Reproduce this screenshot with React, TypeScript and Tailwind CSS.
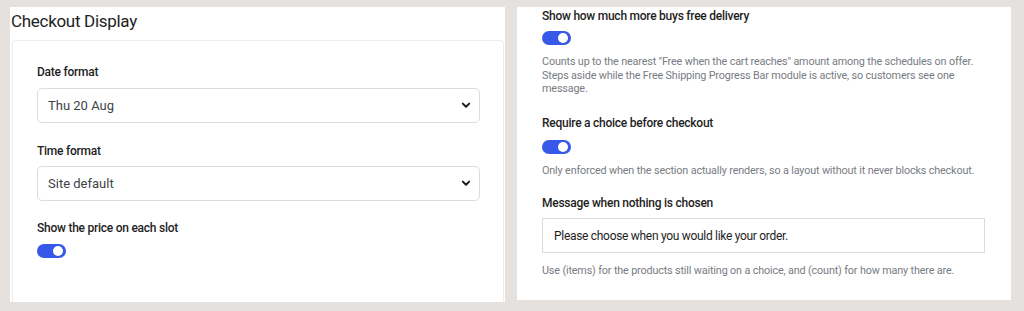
import React from 'react';

const font = { fontFamily: 'Roboto, "Open Sans", "Liberation Sans", sans-serif' };

const Toggle = () => (
  <div className="relative h-[14px] w-[29px] rounded-full bg-[#3858e9]">
    <div className="absolute right-[3px] top-[2px] h-[10px] w-[10px] rounded-full bg-white" />
  </div>
);

const Chevron = () => (
  <svg width="10" height="7" viewBox="0 0 10 7" className="text-[#1e1e1e]">
    <path d="M1.8 1.6 L5 4.8 L8.2 1.6" fill="none" stroke="currentColor" strokeWidth="2" strokeLinecap="round" strokeLinejoin="round" />
  </svg>
);

const Select = ({ value, className }: { value: string; className?: string }) => (
  <div className={`flex h-[35px] w-[443px] items-center justify-between rounded-[5px] border border-[#dcdcde] bg-white pl-[10px] pr-[8px] ${className ?? ''}`}>
    <span className="text-[13px] text-[#3c434a]">{value}</span>
    <Chevron />
  </div>
);

const Label = ({ children, className }: { children: React.ReactNode; className?: string }) => (
  <div className={`text-[12px] leading-[18px] tracking-[-0.25px] font-medium text-[#1e1e1e] ${className ?? ''}`}>{children}</div>
);

const Help = ({ children, className }: { children: React.ReactNode; className?: string }) => (
  <p className={`text-[10.8px] leading-[13.5px] tracking-[-0.15px] text-[#787c82] ${className ?? ''}`}>{children}</p>
);

export default function App() {
  return (
    <div style={font} className="flex h-[311px] w-[1024px] items-start bg-[#e5e1df] pt-[7px]">
      {/* left panel */}
      <div className="ml-[10px] flex h-[295px] w-[495px] flex-col bg-white">
        <div className="h-[33px] pl-[1px] text-[17px] leading-[28px] tracking-[-0.3px] text-[#1e1e1e]">Checkout Display</div>
        <div className="ml-[2px] mr-[1px] flex-1 rounded-t-[4px] border border-b-0 border-[#ececec] pl-[24px] pt-[22px]">
          <Label>Date format</Label>
          <Select value="Thu 20 Aug" className="mt-[7px]" />
          <Label className="mt-[19px]">Time format</Label>
          <Select value="Site default" className="mt-[6px]" />
          <Label className="mt-[18px]">Show the price on each slot</Label>
          <div className="mt-[7px]">
            <Toggle />
          </div>
        </div>
      </div>

      {/* right panel */}
      <div className="ml-[12px] h-[293px] w-[494px] bg-white pl-[25px]">
        <Label>Show how much more buys free delivery</Label>
        <div className="mt-[6px]">
          <Toggle />
        </div>
        <Help className="mt-[10px] w-[440px]">
          Counts up to the nearest "Free when the cart reaches" amount among the schedules on offer. Steps aside while
          the Free Shipping Progress Bar module is active, so customers see one message.
        </Help>
        <Label className="mt-[18px]">Require a choice before checkout</Label>
        <div className="mt-[8px]">
          <Toggle />
        </div>
        <Help className="mt-[10px]">
          Only enforced when the section actually renders, so a layout without it never blocks checkout.
        </Help>
        <Label className="mt-[17px]">Message when nothing is chosen</Label>
        <div className="mt-[6px] flex h-[35px] w-[443px] items-center border border-[#dcdcde] pl-[11px]">
          <span className="text-[12px] tracking-[-0.3px] text-[#1e1e1e]">Please choose when you would like your order.</span>
        </div>
        <Help className="mt-[11px]">
          Use (items) for the products still waiting on a choice, and (count) for how many there are.
        </Help>
      </div>
    </div>
  );
}
